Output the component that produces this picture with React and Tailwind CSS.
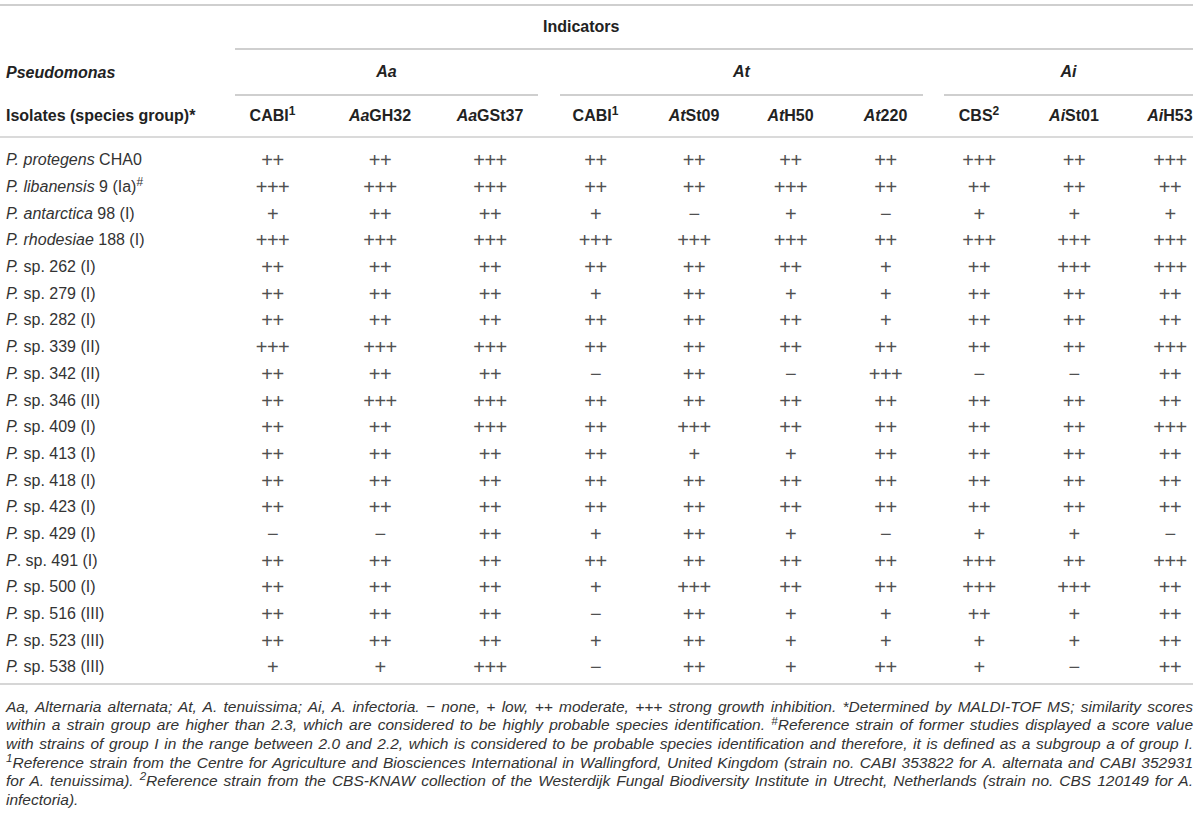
const cols = 'grid grid-cols-[220px_105px_110px_110px_101px_96px_97px_93px_94px_96px_71px]'

// first column: species name (italic genus part) and group
const rows = [
  [<><i>P. protegens</i> CHA0</>, '++', '++', '+++', '++', '++', '++', '++', '+++', '++', '+++'],
  [<><i>P. libanensis</i> 9 (Ia)<sup>#</sup></>, '+++', '+++', '+++', '++', '++', '+++', '++', '++', '++', '++'],
  [<><i>P. antarctica</i> 98 (I)</>, '+', '++', '++', '+', '−', '+', '−', '+', '+', '+'],
  [<><i>P. rhodesiae</i> 188 (I)</>, '+++', '+++', '+++', '+++', '+++', '+++', '++', '+++', '+++', '+++'],
  [<><i>P.</i> sp. 262 (I)</>, '++', '++', '++', '++', '++', '++', '+', '++', '+++', '+++'],
  [<><i>P.</i> sp. 279 (I)</>, '++', '++', '++', '+', '++', '+', '+', '++', '++', '++'],
  [<><i>P.</i> sp. 282 (I)</>, '++', '++', '++', '++', '++', '++', '+', '++', '++', '++'],
  [<><i>P.</i> sp. 339 (II)</>, '+++', '+++', '+++', '++', '++', '++', '++', '++', '++', '+++'],
  [<><i>P.</i> sp. 342 (II)</>, '++', '++', '++', '−', '++', '−', '+++', '−', '−', '++'],
  [<><i>P.</i> sp. 346 (II)</>, '++', '+++', '+++', '++', '++', '++', '++', '++', '++', '++'],
  [<><i>P.</i> sp. 409 (I)</>, '++', '++', '+++', '++', '+++', '++', '++', '++', '++', '+++'],
  [<><i>P.</i> sp. 413 (I)</>, '++', '++', '++', '++', '+', '+', '++', '++', '++', '++'],
  [<><i>P.</i> sp. 418 (I)</>, '++', '++', '++', '++', '++', '++', '++', '++', '++', '++'],
  [<><i>P.</i> sp. 423 (I)</>, '++', '++', '++', '++', '++', '++', '++', '++', '++', '++'],
  [<><i>P.</i> sp. 429 (I)</>, '−', '−', '++', '+', '++', '+', '−', '+', '+', '−'],
  [<><i>P</i>. sp. 491 (I)</>, '++', '++', '++', '++', '++', '++', '++', '+++', '++', '+++'],
  [<><i>P.</i> sp. 500 (I)</>, '++', '++', '++', '+', '+++', '++', '++', '+++', '+++', '++'],
  [<><i>P.</i> sp. 516 (III)</>, '++', '++', '++', '−', '++', '+', '+', '++', '+', '++'],
  [<><i>P.</i> sp. 523 (III)</>, '++', '++', '++', '+', '++', '+', '+', '+', '+', '++'],
  [<><i>P.</i> sp. 538 (III)</>, '+', '+', '+++', '−', '++', '+', '++', '+', '−', '++'],
]

const heads = [
  <>CABI<sup>1</sup></>,
  <><i>Aa</i>GH32</>,
  <><i>Aa</i>GSt37</>,
  <>CABI<sup>1</sup></>,
  <><i>At</i>St09</>,
  <><i>At</i>H50</>,
  <><i>At</i>220</>,
  <>CBS<sup>2</sup></>,
  <><i>Ai</i>St01</>,
  <><i>Ai</i>H53</>,
]

const notes = [
  <>Aa, Alternaria alternata; At, A. tenuissima; Ai, A. infectoria. − none, + low, ++ moderate, +++ strong growth inhibition. *Determined by MALDI-TOF MS; similarity scores</>,
  <>within a strain group are higher than 2.3, which are considered to be highly probable species identification. <sup>#</sup>Reference strain of former studies displayed a score value</>,
  <>with strains of group I in the range between 2.0 and 2.2, which is considered to be probable species identification and therefore, it is defined as a subgroup a of group I.</>,
  <><sup>1</sup>Reference strain from the Centre for Agriculture and Biosciences International in Wallingford, United Kingdom (strain no. CABI 353822 for A. alternata and CABI 352931</>,
  <>for A. tenuissima). <sup>2</sup>Reference strain from the CBS-KNAW collection of the Westerdijk Fungal Biodiversity Institute in Utrecht, Netherlands (strain no. CBS 120149 for A.</>,
]

export default function App() {
  return (
    <div className="w-[1200px] min-h-[820px] bg-white pt-[4px] font-['Liberation_Sans',Arial,sans-serif] text-[#333]">
      <div className="w-[1193px]">
        {/* Indicators */}
        <div className="border-t-2 border-[#cfcfcf] h-[44px] flex items-center pl-[543px] text-[16px] font-bold text-[#222]">
          Indicators
        </div>
        <div className="ml-[235px] border-t-2 border-[#cfcfcf]" />

        {/* Groups */}
        <div className={`${cols} h-[46px] text-[16px] font-bold italic text-[#222]`}>
          <div className="flex items-center pl-[6px]">Pseudomonas</div>
          <div className="col-span-3 ml-[15px] mr-[7px] border-b-2 border-[#cfcfcf] flex items-center justify-center">Aa</div>
          <div className="col-span-4 ml-[15px] mr-[9px] border-b-2 border-[#cfcfcf] flex items-center justify-center">At</div>
          <div className="col-span-3 ml-[12px] border-b-2 border-[#cfcfcf] flex items-center justify-center">Ai</div>
        </div>

        {/* Column heads */}
        <div className={`${cols} h-[42px] items-center border-b-2 border-[#dadada] text-[16px] font-bold text-[#222]`}>
          <div className="pl-[6px]">Isolates (species group)*</div>
          {heads.map((h, i) => (
            <div key={i} className={`text-center whitespace-nowrap ${i === 9 ? 'pl-[25px]' : ''}`}>{h}</div>
          ))}
        </div>

        {/* Body */}
        <div className="pt-[9px] pb-[2px] border-b-2 border-[#d6d6d6] text-[16px]">
          {rows.map((r, ri) => (
            <div key={ri} className={`${cols} h-[26.7px] items-center`}>
              <div className="pl-[6px] whitespace-nowrap">{r[0]}</div>
              {r.slice(1).map((v, i) => (
                <div key={i} className={`text-center text-[20px] leading-none text-[#505050] tracking-[-0.5px] ${i === 9 ? 'pl-[25px]' : ''}`}>{v}</div>
              ))}
            </div>
          ))}
        </div>

        {/* Footnotes */}
        <div className="mt-[13px] pl-[6px] text-[15.5px] italic leading-[18.6px] text-[#333]">
          {notes.map((n, i) => (
            <div key={i} className="whitespace-nowrap text-justify [text-align-last:justify]">{n}</div>
          ))}
          <div>infectoria).</div>
        </div>
      </div>
    </div>
  )
}
